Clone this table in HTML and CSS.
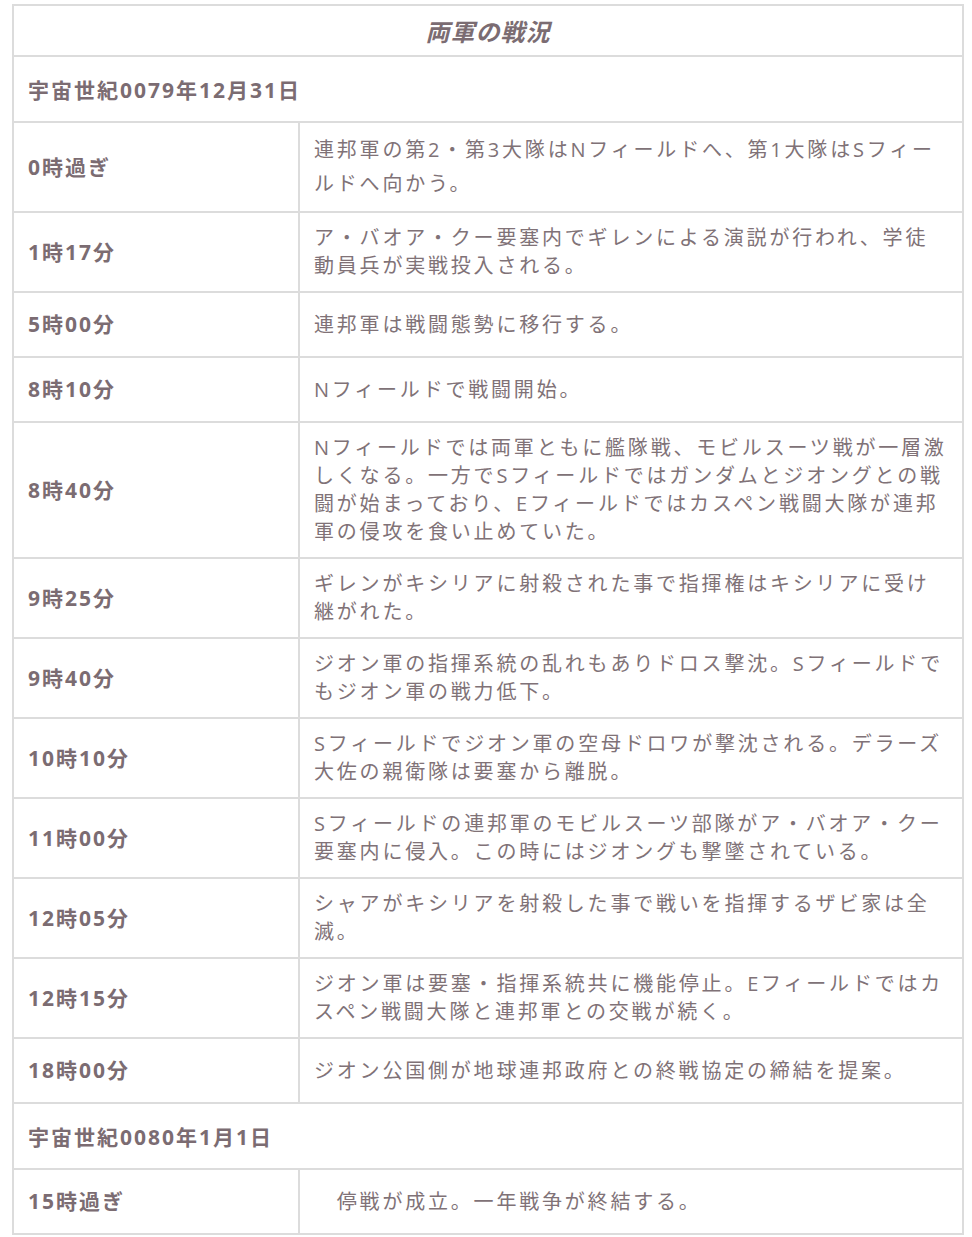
FILE: index.html
```html
<!DOCTYPE html>
<html lang="ja">
<head>
<meta charset="utf-8">
<title>両軍の戦況</title>
<link rel="stylesheet" href="styles.css">
</head>
<body>
<table class="timeline">
  <colgroup>
    <col class="col-time">
    <col class="col-event">
  </colgroup>
  <thead>
    <tr><th colspan="2" class="title">両軍の戦況</th></tr>
  </thead>
  <tbody>
    <tr><td colspan="2" class="date">宇宙世紀0079年12月31日</td></tr>
    <tr class="tall"><td class="time">0時過ぎ</td><td class="event">連邦軍の第2・第3大隊はNフィールドへ、第1大隊はSフィールドへ向かう。</td></tr>
    <tr><td class="time">1時17分</td><td class="event">ア・バオア・クー要塞内でギレンによる演説が行われ、学徒動員兵が実戦投入される。</td></tr>
    <tr><td class="time">5時00分</td><td class="event">連邦軍は戦闘態勢に移行する。</td></tr>
    <tr><td class="time">8時10分</td><td class="event">Nフィールドで戦闘開始。</td></tr>
    <tr><td class="time">8時40分</td><td class="event">Nフィールドでは両軍ともに艦隊戦、モビルスーツ戦が一層激しくなる。一方でSフィールドではガンダムとジオングとの戦闘が始まっており、Eフィールドではカスペン戦闘大隊が連邦軍の侵攻を食い止めていた。</td></tr>
    <tr><td class="time">9時25分</td><td class="event">ギレンがキシリアに射殺された事で指揮権はキシリアに受け継がれた。</td></tr>
    <tr><td class="time">9時40分</td><td class="event">ジオン軍の指揮系統の乱れもありドロス撃沈。Sフィールドでもジオン軍の戦力低下。</td></tr>
    <tr><td class="time">10時10分</td><td class="event">Sフィールドでジオン軍の空母ドロワが撃沈される。デラーズ大佐の親衛隊は要塞から離脱。</td></tr>
    <tr><td class="time">11時00分</td><td class="event">Sフィールドの連邦軍のモビルスーツ部隊がア・バオア・クー要塞内に侵入。この時にはジオングも撃墜されている。</td></tr>
    <tr><td class="time">12時05分</td><td class="event">シャアがキシリアを射殺した事で戦いを指揮するザビ家は全滅。</td></tr>
    <tr><td class="time">12時15分</td><td class="event">ジオン軍は要塞・指揮系統共に機能停止。Eフィールドではカスペン戦闘大隊と連邦軍との交戦が続く。</td></tr>
    <tr><td class="time">18時00分</td><td class="event">ジオン公国側が地球連邦政府との終戦協定の締結を提案。</td></tr>
    <tr><td colspan="2" class="date">宇宙世紀0080年1月1日</td></tr>
    <tr><td class="time">15時過ぎ</td><td class="event">　停戦が成立。一年戦争が終結する。</td></tr>
  </tbody>
</table>
</body>
</html>
```

FILE: styles.css
```css
html, body {
  margin: 0;
  padding: 0;
  background: #ffffff;
}

body {
  padding: 4px 8px 0 12px;
  font-family: "Open Sans", "Noto Sans CJK JP", sans-serif;
  color: #7b6c72;
}

.timeline {
  width: 952px;
  border-collapse: collapse;
  border: 2px solid #dcdcdc;
}

.col-time {
  width: 286px;
}

.timeline th,
.timeline td {
  border: 2px solid #dcdcdc;
  text-align: left;
  vertical-align: middle;
}

.title {
  height: 49px;
  padding: 0;
  text-align: center !important;
  font-size: 24px;
  font-weight: 700;
  font-style: italic;
  letter-spacing: 1px;
}

.date {
  height: 66px;
  padding: 0 14px;
  font-size: 21px;
  font-weight: 700;
  letter-spacing: 2px;
  box-sizing: border-box;
}

.time {
  padding: 12px 14px;
  font-size: 21px;
  font-weight: 700;
  line-height: 39px;
  letter-spacing: 2px;
}

.event {
  padding: 11px 14px;
  font-size: 20px;
  font-weight: 400;
  line-height: 28px;
  letter-spacing: 2.8px;
  color: #807277;
}

.tall .event {
  padding: 10px 14px;
  line-height: 34px;
}
```
